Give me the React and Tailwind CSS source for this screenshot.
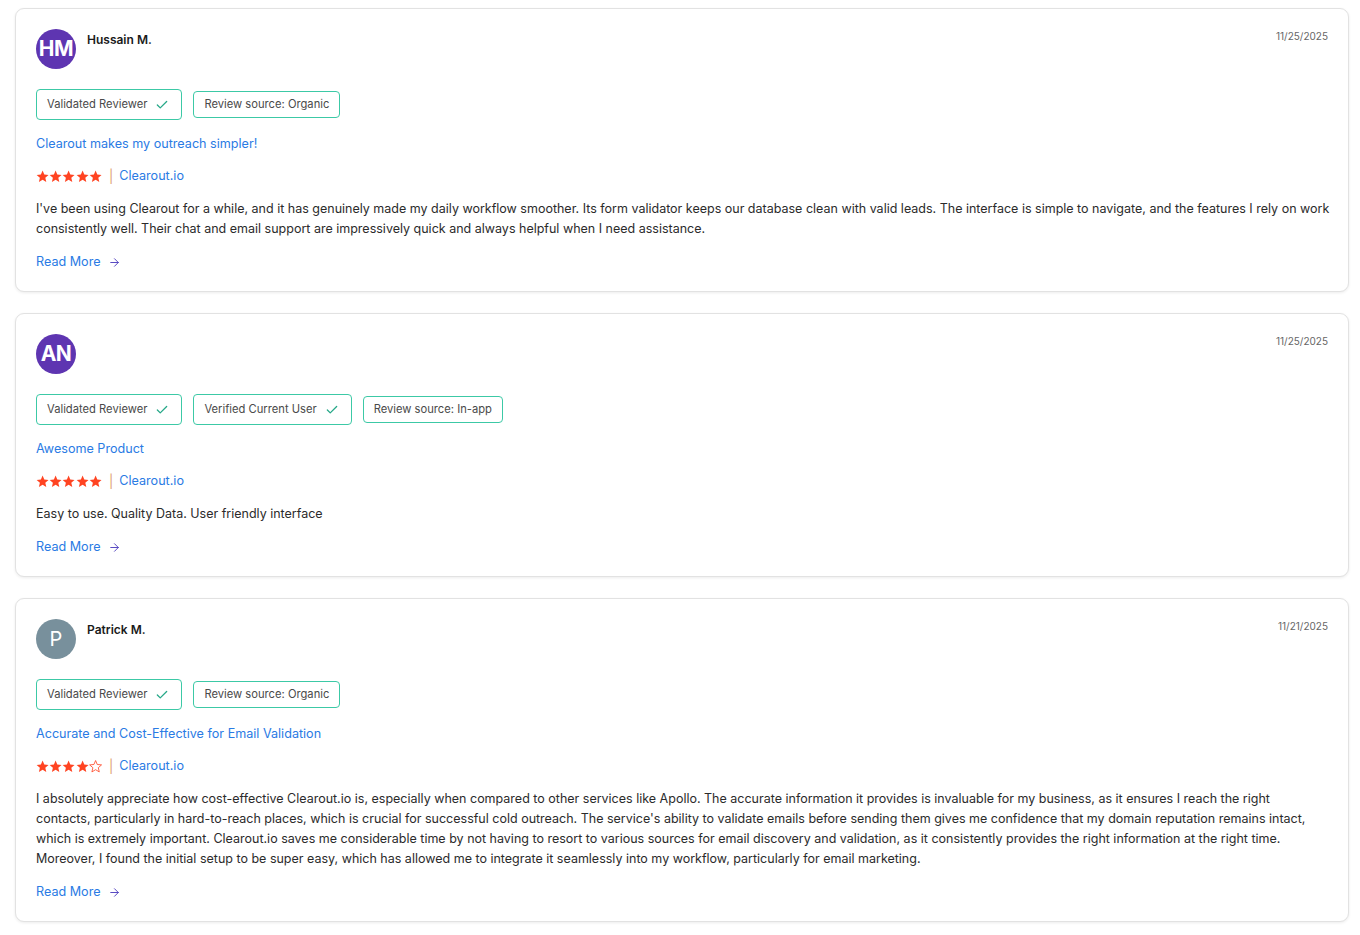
import { Check, ArrowRight } from 'lucide-react'

const reviews = [
  {
    initials: 'HM',
    avatar: 'bg-[#5e35b1]',
    name: 'Hussain M.',
    date: '11/25/2025',
    badges: [
      { label: 'Validated Reviewer', check: true },
      { label: 'Review source: Organic' },
    ],
    title: 'Clearout makes my outreach simpler!',
    rating: 5,
    body: [
      "I've been using Clearout for a while, and it has genuinely made my daily workflow smoother. Its form validator keeps our database clean with valid leads. The interface is simple to navigate, and the features I rely on work",
      'consistently well. Their chat and email support are impressively quick and always helpful when I need assistance.',
    ],
  },
  {
    initials: 'AN',
    avatar: 'bg-[#5e35b1]',
    name: '',
    date: '11/25/2025',
    badges: [
      { label: 'Validated Reviewer', check: true },
      { label: 'Verified Current User', check: true },
      { label: 'Review source: In-app' },
    ],
    title: 'Awesome Product',
    rating: 5,
    body: ['Easy to use. Quality Data. User friendly interface'],
  },
  {
    initials: 'P',
    avatar: 'bg-[#78909c]',
    light: true,
    name: 'Patrick M.',
    date: '11/21/2025',
    badges: [
      { label: 'Validated Reviewer', check: true },
      { label: 'Review source: Organic' },
    ],
    title: 'Accurate and Cost-Effective for Email Validation',
    rating: 4,
    body: [
      'I absolutely appreciate how cost-effective Clearout.io is, especially when compared to other services like Apollo. The accurate information it provides is invaluable for my business, as it ensures I reach the right',
      "contacts, particularly in hard-to-reach places, which is crucial for successful cold outreach. The service's ability to validate emails before sending them gives me confidence that my domain reputation remains intact,",
      'which is extremely important. Clearout.io saves me considerable time by not having to resort to various sources for email discovery and validation, as it consistently provides the right information at the right time.',
      'Moreover, I found the initial setup to be super easy, which has allowed me to integrate it seamlessly into my workflow, particularly for email marketing.',
    ],
  },
]

function Star({ filled }) {
  return (
    <svg width="13.2" height="13" viewBox="0 0 24 24" className="shrink-0">
      <path
        d="M12 1l3.1 7.3 7.9.7-6 5.2 1.8 7.8L12 17.9 5.2 22l1.8-7.8-6-5.2 7.9-.7z"
        fill={filled ? '#ff4422' : 'none'}
        stroke="#ff4422"
        strokeWidth={filled ? 0 : 1.5}
        strokeLinejoin="round"
      />
    </svg>
  )
}

function Badge({ label, check }) {
  return (
    <div
      className={`flex items-center border border-[#3cc9a6] rounded-[4px] pl-[10px] text-[11.2px] text-[#4a4a4a] ${
        check ? 'h-[31px] pr-[12px] gap-[8px]' : 'h-[27px] pr-[10px]'
      }`}
    >
      <span>{label}</span>
      {check && <Check size={14} strokeWidth={2.2} className="text-[#26a888]" />}
    </div>
  )
}

function ReviewCard({ r }) {
  return (
    <div className="bg-white border border-[#e2e2e2] rounded-[9px] shadow-[0_1px_3px_rgba(0,0,0,0.08)] px-5 pt-5 pb-[19px]">
      <div className="flex items-start justify-between">
        <div className="flex items-start gap-[11px]">
          <div
            className={`w-10 h-10 rounded-full ${r.avatar} flex items-center justify-center text-white ${
              r.light ? 'text-[20px] font-normal' : 'text-[21px] font-bold tracking-[-0.5px]'
            }`}
          >
            {r.initials}
          </div>
          {r.name && <div className="text-[12px] font-semibold text-[#1a1a1a] mt-[2px]">{r.name}</div>}
        </div>
        <div className="text-[10px] text-[#666]">{r.date}</div>
      </div>

      <div className="flex items-center gap-[11px] mt-5">
        {r.badges.map(b => (
          <Badge key={b.label} {...b} />
        ))}
      </div>

      <div className="text-[12.6px] text-[#2a7be4] mt-[14px] leading-5">{r.title}</div>

      <div className="flex items-center mt-3 leading-5">
        <div className="flex">
          {[0, 1, 2, 3, 4].map(i => (
            <Star key={i} filled={i < r.rating} />
          ))}
        </div>
        <span className="text-[#e0a070] ml-[7px] mr-[6px] text-[13px]">|</span>
        <span className="text-[12.6px] text-[#2a7be4]">Clearout.io</span>
      </div>

      <p className="text-[12.5px] text-[#2b2b2b] leading-5 mt-[13px]">
        {r.body.map((line, i) => (
          <span key={i} className="block whitespace-nowrap">
            {line}
          </span>
        ))}
      </p>

      <div className="flex items-center gap-[7px] mt-[13px] leading-5">
        <span className="text-[12.6px] text-[#2a7be4]">Read More</span>
        <ArrowRight size={13} strokeWidth={1.8} className="text-[#5546c0]" />
      </div>
    </div>
  )
}

export default function App() {
  return (
    <div
      className="bg-white pl-[15px] pr-[11px] pt-[8px] pb-2 flex flex-col gap-[21px]"
      style={{ fontFamily: "Inter, 'Noto Sans', sans-serif" }}
    >
      {reviews.map((r, i) => (
        <ReviewCard key={i} r={r} />
      ))}
    </div>
  )
}
